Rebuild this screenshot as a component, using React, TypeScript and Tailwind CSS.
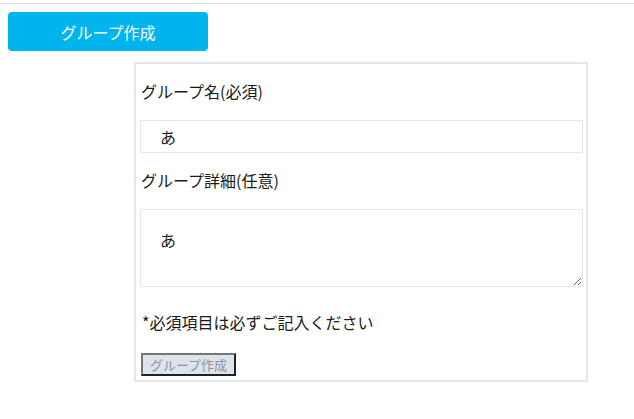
import React from 'react';

const font = { fontFamily: '"Noto Sans CJK JP", "Noto Sans", sans-serif' };

export default function App() {
  return (
    <div className="min-h-[419px] w-[634px] bg-white text-[#1a1a1a]" style={font}>
      <div className="h-[4px] border-b border-[#dcdcdc]" />
      <div className="pl-[8px] pt-[8px]">
        <button className="flex h-[39px] w-[200px] items-center justify-center rounded-[4px] bg-[#00b4ed] text-[16px] text-white">
          グループ作成
        </button>
      </div>

      <div className="ml-[134px] mt-[11px] w-[454px] border-2 border-[#e1e6ec] pb-[4px] pl-[4px] pr-[3px] pt-[16px]">
        <div className="h-[22px] pl-[1px] text-[16px] leading-[22px]">グループ名(必須)</div>
        <input
          className="mt-[18px] block h-[33px] w-full border border-[#e4e6e9] pl-[19px] text-[16px] outline-none"
          defaultValue="あ"
        />
        <div className="mt-[16px] h-[22px] pl-[1px] text-[16px] leading-[22px]">グループ詳細(任意)</div>
        <textarea
          className="mt-[18px] block h-[78px] w-full border border-[#e4e6e9] pl-[19px] pt-[18px] text-[16px] outline-none"
          defaultValue="あ"
        />
        <div className="mt-[24px] h-[22px] pl-[2px] text-[16px] leading-[22px]">*必須項目は必ずご記入ください</div>
        <button className="ml-[1px] mt-[20px] flex h-[23px] w-[95px] items-center justify-center border-2 border-t-[#767676] border-l-[#767676] border-r-[#222] border-b-[#222] bg-[#dde3ea] text-[13px] text-[#8e959c]">
          グループ作成
        </button>
      </div>
    </div>
  );
}
